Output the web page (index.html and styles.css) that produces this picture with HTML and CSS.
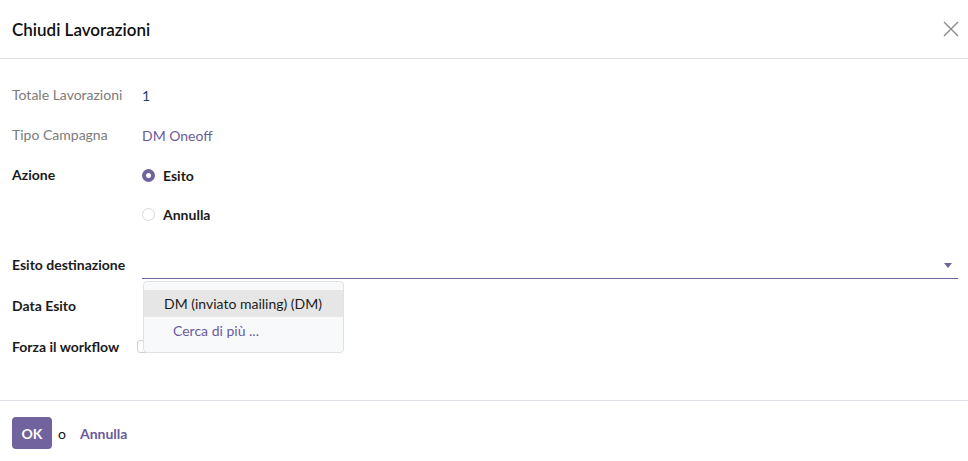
FILE: index.html
```html
<!DOCTYPE html>
<html lang="it">
<head>
<meta charset="utf-8">
<title>Chiudi Lavorazioni</title>
<link rel="stylesheet" href="styles.css">
</head>
<body>
<div class="modal">
  <header class="modal-header">
    <h4 class="modal-title">Chiudi Lavorazioni</h4>
    <button class="btn-close" aria-label="Chiudi">
      <svg width="16" height="16" viewBox="0 0 16 16"><path d="M1 1 L15 15 M15 1 L1 15" stroke="#8a8a8a" stroke-width="1.4" fill="none"/></svg>
    </button>
  </header>
  <main class="modal-body">
    <div class="row r1">
      <span class="label muted">Totale Lavorazioni</span>
      <span class="value num">1</span>
    </div>
    <div class="row r2">
      <span class="label muted">Tipo Campagna</span>
      <span class="value link">DM Oneoff</span>
    </div>
    <div class="row r3">
      <span class="label strong">Azione</span>
      <label class="radio"><span class="dot checked"></span><span class="rlabel">Esito</span></label>
    </div>
    <div class="row r4">
      <span class="label"></span>
      <label class="radio"><span class="dot"></span><span class="rlabel">Annulla</span></label>
    </div>
    <div class="row r5">
      <span class="label strong">Esito destinazione</span>
      <div class="field">
        <div class="input"></div>
        <span class="caret"></span>
        <ul class="dropdown">
          <li class="item active">DM (inviato mailing) (DM)</li>
          <li class="item more">Cerca di più ...</li>
        </ul>
      </div>
    </div>
    <div class="row r6">
      <span class="label strong">Data Esito</span>
      <span class="value"></span>
    </div>
    <div class="row r7">
      <span class="label strong">Forza il workflow</span>
      <span class="check"></span>
    </div>
  </main>
  <footer class="modal-footer">
    <button class="btn-ok">OK</button>
    <span class="or">o</span>
    <a class="cancel">Annulla</a>
  </footer>
</div>
</body>
</html>
```
FILE: styles.css
```css
* { box-sizing: border-box; }
html, body { margin: 0; padding: 0; background: #fff; }
body {
  font-family: Lato, "Noto Sans", "Liberation Sans", sans-serif;
  font-size: 14px;
  color: #212529;
}
.modal { width: 968px; height: 461px; overflow: hidden; }
.modal-header {
  height: 59px;
  border-bottom: 1px solid #dee2e6;
  display: flex;
  align-items: center;
  justify-content: space-between;
  padding: 0 8px 0 12px;
}
.modal-title {
  margin: 0;
  font-size: 17px;
  font-weight: 600;
  color: #111;
}
.btn-close {
  background: none;
  border: 0;
  padding: 0;
  width: 18px;
  height: 18px;
  display: flex;
  align-items: center;
  justify-content: center;
}
.modal-body {
  height: 342px;
  padding: 16px 10px 0 12px;
  border-bottom: 1px solid #dee2e6;
}
.row {
  display: grid;
  grid-template-columns: 130px 1fr;
  align-items: center;
  height: 40px;
}
.r3 { height: 40px; }
.r4 { height: 38px; margin-bottom: 12px; }
.r5 { height: 40px; }
.r6 { height: 41px; }
.r7 { height: 41px; }
.label { line-height: 20px; }
.muted { color: #7b7b7b; }
.strong { font-weight: 700; color: #1b1b1b; }
.num { color: #233f7c; }
.link { color: #6a5c9a; }
.radio { display: flex; align-items: center; gap: 8px; font-weight: 700; color: #1b1b1b; }
.dot {
  width: 13px; height: 13px;
  border-radius: 50%;
  border: 1px solid #d8d8dc;
  background: #fff;
}
.dot.checked {
  border: 4px solid #71639e;
  background: #fff;
}
.field { position: relative; height: 26px; align-self: end; margin-bottom: 6px; }
.input { height: 26px; border-bottom: 1px solid #71639e; }
.caret {
  position: absolute;
  right: 6px;
  top: 10px;
  width: 0; height: 0;
  border-left: 4px solid transparent;
  border-right: 4px solid transparent;
  border-top: 5px solid #71639e;
}
.dropdown {
  position: absolute;
  left: 1px;
  top: 28px;
  width: 201px;
  margin: 0;
  padding: 8px 0;
  list-style: none;
  background: #f8f9fa;
  border: 1px solid #dfe1e5;
  border-radius: 4px;
  z-index: 2;
}
.item { height: 27px; line-height: 27px; padding-left: 20px; color: #1b1b1b; white-space: nowrap; }
.item.active { background: #e6e6e6; }
.item.more { padding-left: 29px; color: #6a5c9a; }
.check {
  width: 13px; height: 13px;
  border: 1px solid #d0d0d4;
  border-radius: 3px;
  margin-left: -5px;
}
.modal-footer {
  display: flex;
  align-items: center;
  padding: 16px 12px;
}
.btn-ok {
  width: 40px; height: 32px;
  background: #71639e;
  color: #fff;
  border: 0;
  border-radius: 4px;
  font-family: inherit;
  font-size: 14px;
  font-weight: 700;
  padding: 0;
}
.or { margin-left: 6px; color: #111; }
.cancel { margin-left: 14px; color: #6a5c9a; font-weight: 700; }
```
